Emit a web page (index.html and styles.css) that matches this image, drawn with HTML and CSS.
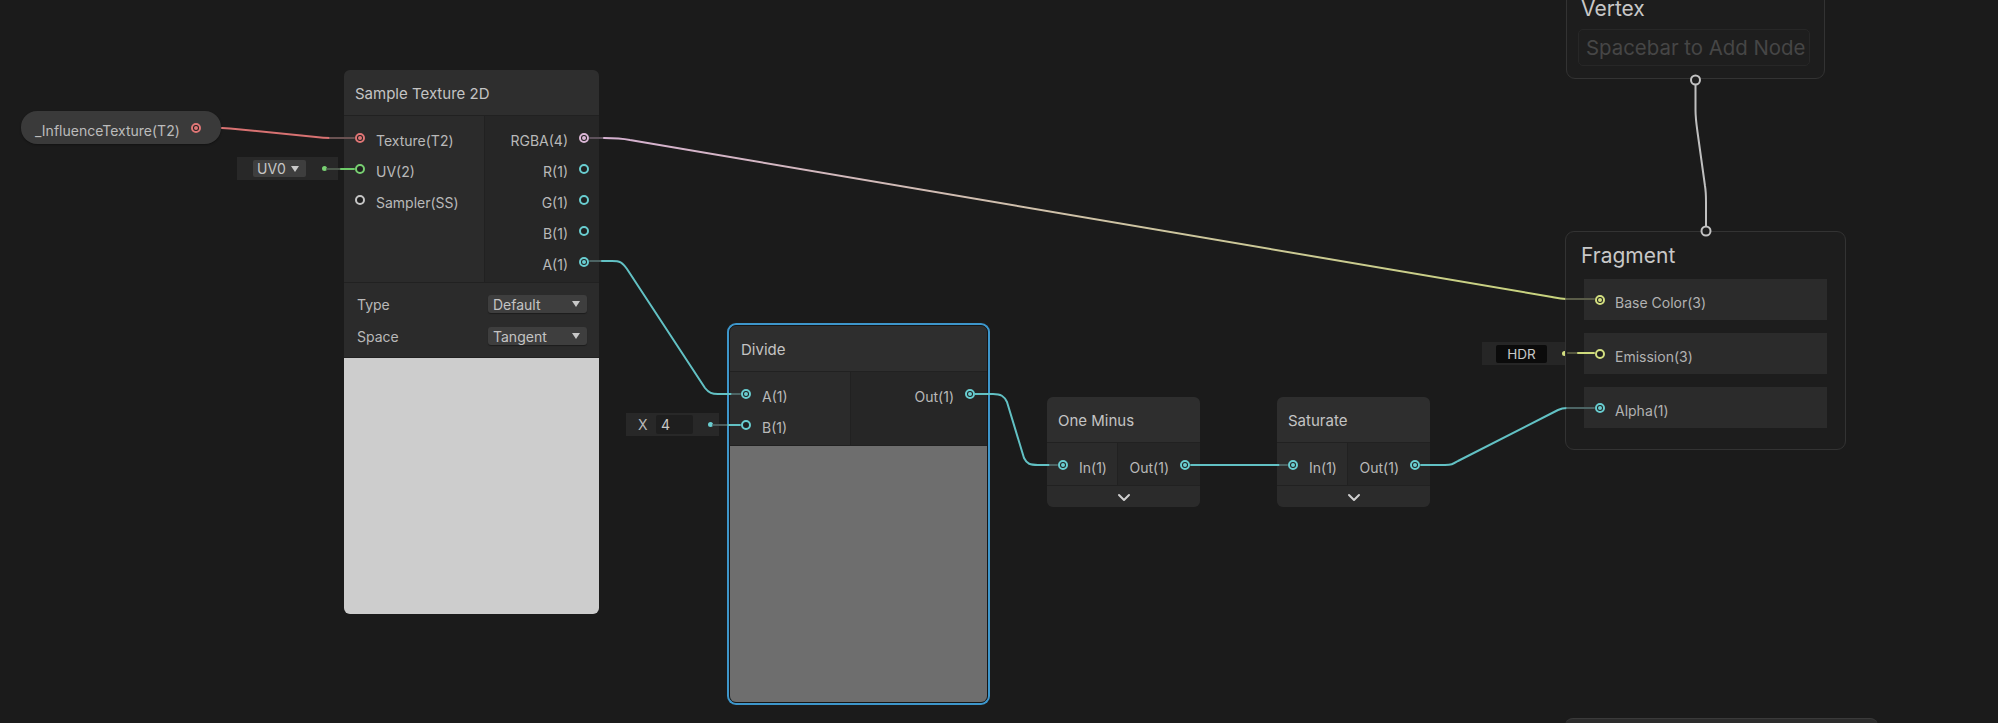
FILE: index.html
```html
<!DOCTYPE html>
<html>
<head>
<meta charset="utf-8">
<link rel="stylesheet" href="styles.css">
</head>
<body>
<div class="canvas">
  <!-- property node -->
  <div class="prop">
    <span class="lbl">_InfluenceTexture(T2)</span>
    <span class="port c-tex on"></span>
  </div>

  <!-- UV0 inline input -->
  <div class="inline uv-inline">
    <div class="chip">UV0<span class="tri"></span></div>
    <span class="dot d-green"></span>
  </div>

  <!-- Sample Texture 2D -->
  <div class="node n-sample">
    <div class="node-title">Sample Texture 2D</div>
    <div class="node-ports">
      <div class="col-in w140">
        <div class="row"><span class="port c-tex on"></span><span class="lbl">Texture(T2)</span></div>
        <div class="row"><span class="port c-v2"></span><span class="lbl">UV(2)</span></div>
        <div class="row"><span class="port c-ss"></span><span class="lbl">Sampler(SS)</span></div>
      </div>
      <div class="col-out">
        <div class="row"><span class="lbl">RGBA(4)</span><span class="port c-v4 on"></span></div>
        <div class="row"><span class="lbl">R(1)</span><span class="port c-v1"></span></div>
        <div class="row"><span class="lbl">G(1)</span><span class="port c-v1"></span></div>
        <div class="row"><span class="lbl">B(1)</span><span class="port c-v1"></span></div>
        <div class="row"><span class="lbl">A(1)</span><span class="port c-v1 on"></span></div>
      </div>
    </div>
    <div class="settings">
      <div class="set-row"><span>Type</span><div class="dropdown">Default<span class="tri"></span></div></div>
      <div class="set-row"><span>Space</span><div class="dropdown">Tangent<span class="tri"></span></div></div>
    </div>
    <div class="preview p-light"></div>
  </div>

  <!-- X 4 inline -->
  <div class="inline x-inline">
    <span class="x-label">X</span>
    <div class="num-field">4</div>
    <span class="dot d-teal"></span>
  </div>

  <!-- Divide -->
  <div class="node n-divide selected">
    <div class="node-title">Divide</div>
    <div class="node-ports">
      <div class="col-in w120">
        <div class="row"><span class="port c-v1 on"></span><span class="lbl">A(1)</span></div>
        <div class="row"><span class="port c-v1"></span><span class="lbl">B(1)</span></div>
      </div>
      <div class="col-out pr12">
        <div class="row"><span class="lbl">Out(1)</span><span class="port c-v1 on"></span></div>
      </div>
    </div>
    <div class="preview p-mid"></div>
  </div>

  <!-- One Minus -->
  <div class="node n-oneminus">
    <div class="node-title">One Minus</div>
    <div class="node-ports">
      <div class="col-in w70">
        <div class="row"><span class="port c-v1 on"></span><span class="lbl">In(1)</span></div>
      </div>
      <div class="col-out">
        <div class="row"><span class="lbl">Out(1)</span><span class="port c-v1 on"></span></div>
      </div>
    </div>
    <div class="collapse"><svg width="14" height="9" viewBox="0 0 14 9"><polyline points="2,2 7,7 12,2" fill="none" stroke="#cfcfcf" stroke-width="2" stroke-linecap="round" stroke-linejoin="round"/></svg></div>
  </div>

  <!-- Saturate -->
  <div class="node n-saturate">
    <div class="node-title">Saturate</div>
    <div class="node-ports">
      <div class="col-in w70">
        <div class="row"><span class="port c-v1 on"></span><span class="lbl">In(1)</span></div>
      </div>
      <div class="col-out">
        <div class="row"><span class="lbl">Out(1)</span><span class="port c-v1 on"></span></div>
      </div>
    </div>
    <div class="collapse"><svg width="14" height="9" viewBox="0 0 14 9"><polyline points="2,2 7,7 12,2" fill="none" stroke="#cfcfcf" stroke-width="2" stroke-linecap="round" stroke-linejoin="round"/></svg></div>
  </div>

  <!-- Vertex block -->
  <div class="stack vertex">
    <div class="stack-title">Vertex</div>
    <div class="add-field">Spacebar to Add Node</div>
  </div>

  <!-- HDR inline -->
  <div class="inline hdr-inline">
    <div class="hdr-chip">HDR</div>
    <span class="dot d-yellow"></span>
  </div>

  <!-- Fragment block -->
  <div class="stack fragment">
    <div class="stack-title">Fragment</div>
    <div class="block-list">
      <div class="block"><span class="port c-v3 on"></span><span class="lbl">Base Color(3)</span></div>
      <div class="block"><span class="port c-v3"></span><span class="lbl">Emission(3)</span></div>
      <div class="block"><span class="port c-v1 on"></span><span class="lbl">Alpha(1)</span></div>
    </div>
  </div>

  <div class="offscreen-node"></div>

  <svg class="wires" width="1998" height="723" viewBox="0 0 1998 723">
    <defs>
      <linearGradient id="gRgba" gradientUnits="userSpaceOnUse" x1="606" y1="0" x2="1566" y2="0">
        <stop offset="0" stop-color="#d6b1d1"/>
        <stop offset="1" stop-color="#c8d47c"/>
      </linearGradient>
    </defs>
    <g fill="none" stroke-width="2" stroke-linecap="round" stroke-linejoin="round">
      <!-- texture -->
      <path d="M222,128 C228,128.3 232,128.6 238,129.2 L316,137 C321,137.7 325,138 330,138" stroke="#d87272"/>
      <path d="M330,138 H354" stroke="#6a5252"/>
      <!-- uv -->
      <path d="M327,169 H341" stroke="#4d5a4c"/>
      <path d="M341,169 H354" stroke="#6ecb69"/>
      <!-- rgba to base color -->
      <path d="M590,138 H604" stroke="#5e525c"/>
      <path d="M604,138 C616,138 620,138 630,140 L1552,297 C1558,298.3 1560,299 1566,299" stroke="url(#gRgba)"/>
      <path d="M1566,299 H1594" stroke="#5a5c48"/>
      <!-- A to divide A -->
      <path d="M590,261 H602" stroke="#4c6464"/>
      <path d="M602,261 H612 C620,261 622,262 627,269 L705,388 C709,393 712,394 718,394 H732" stroke="#62c1c4"/>
      <path d="M732,394 H740" stroke="#4c6464"/>
      <!-- X4 to B -->
      <path d="M713,425 H728" stroke="#4c5c5c"/>
      <path d="M728,425 H740" stroke="#62c1c4"/>
      <!-- divide out to one minus -->
      <path d="M975,394 H993 C1001,394 1004,396 1007,402 L1024,458 C1027,464 1030,465 1038,465 H1050" stroke="#62c1c4"/>
      <path d="M1050,465 H1057" stroke="#4c6464"/>
      <!-- one minus to saturate -->
      <path d="M1191,465 H1280" stroke="#62c1c4"/>
      <path d="M1280,465 H1287" stroke="#4c6464"/>
      <!-- saturate to alpha -->
      <path d="M1421,465 H1445 C1452,465 1453,464 1458,461 L1558,410 C1561,408.5 1563,408 1567,408" stroke="#62c1c4"/>
      <path d="M1567,408 H1594" stroke="#4c6464"/>
      <!-- hdr to emission -->
      <path d="M1568,353 H1578" stroke="#55573f"/>
      <path d="M1578,353 H1594" stroke="#cfdb7c"/>
      <!-- vertex to fragment -->
      <path d="M1695.5,85 L1695.5,110 C1695.5,118 1696.5,125 1697.5,132 L1705,186 C1706,192 1706,196 1706,202 L1706,226" stroke="#bfbfbf"/>
    </g>
    <circle cx="1695.5" cy="80" r="4.5" fill="#1d1d1d" stroke="#c2c2c2" stroke-width="2"/>
    <circle cx="1706" cy="231" r="4.5" fill="#1d1d1d" stroke="#c2c2c2" stroke-width="2"/>
  </svg>
</div>
</body>
</html>
```

FILE: styles.css
```css
* { box-sizing: border-box; }

body {
  margin: 0;
  background: #1b1b1b;
  font-family: Inter, "Noto Sans", "Liberation Sans", sans-serif;
}

.canvas {
  position: relative;
  width: 1998px;
  height: 723px;
  overflow: hidden;
  background: #1b1b1b;
}

.wires {
  position: absolute;
  left: 0;
  top: 0;
  pointer-events: none;
}

.lbl {
  padding-top: 5px;
  white-space: nowrap;
}

/* ports */
.port {
  --c: #c8c8c8;
  position: relative;
  flex: none;
  width: 10px;
  height: 10px;
  border-radius: 50%;
  border: 2px solid var(--c);
  background: #1f1f1f;
}
.port.on::after {
  content: "";
  position: absolute;
  left: 1px;
  top: 1px;
  width: 4px;
  height: 4px;
  border-radius: 50%;
  background: var(--c);
}
.c-tex { --c: #e07676; }
.c-v2 { --c: #78d072; }
.c-ss { --c: #c6c6c6; }
.c-v4 { --c: #dab6d5; }
.c-v1 { --c: #69cdd0; }
.c-v3 { --c: #d3df80; }

.dot {
  width: 5px;
  height: 5px;
  border-radius: 50%;
  margin-left: auto;
  flex: none;
}
.d-green { background: #78d072; }
.d-teal { background: #69cdd0; }
.d-yellow { background: #d3df80; }

/* property pill */
.prop {
  position: absolute;
  left: 21px;
  top: 111px;
  width: 200px;
  height: 33px;
  border-radius: 16px;
  background: #3a3a3a;
  display: flex;
  align-items: center;
  justify-content: space-between;
  padding: 0 20px 0 14px;
  font-size: 14px;
  color: #bcbcbc;
  box-shadow: 0 1px 2px rgba(0,0,0,0.35);
}

/* inline inputs */
.inline {
  position: absolute;
  height: 23px;
  background: #282828;
  display: flex;
  align-items: center;
  font-size: 14px;
  color: #c6c6c6;
}
.uv-inline {
  left: 237px;
  top: 157px;
  width: 101px;
  padding: 0 11px 0 16px;
}
.chip {
  width: 53px;
  height: 17px;
  background: #3e3e3e;
  border-radius: 2px;
  display: flex;
  align-items: center;
  padding-left: 4px;
  gap: 5px;
  font-size: 14px;
  line-height: 17px;
}
.tri {
  width: 0;
  height: 0;
  border-left: 4.5px solid transparent;
  border-right: 4.5px solid transparent;
  border-top: 6px solid #c8c8c8;
}
.x-inline {
  left: 626px;
  top: 413px;
  width: 93px;
  padding: 0 6px 0 12px;
}
.x-label {
  width: 18px;
  color: #b8b8b8;
}
.num-field {
  width: 37px;
  height: 19px;
  background: #1e1e1e;
  border-radius: 2px;
  padding-left: 5px;
  line-height: 19px;
  color: #c8c8c8;
}
.hdr-inline {
  left: 1482px;
  top: 342px;
  width: 95px;
  padding: 0 10px 0 14px;
  background: #262626;
}
.hdr-chip {
  width: 51px;
  height: 18px;
  background: #0b0b0b;
  border-radius: 2px;
  text-align: center;
  line-height: 19px;
  font-size: 13.5px;
  color: #c8c8c8;
}

/* nodes */
.node {
  position: absolute;
  border-radius: 6px;
  overflow: hidden;
  background: #202020;
  display: flex;
  flex-direction: column;
}
.node-title {
  height: 46px;
  flex: none;
  border-bottom: 1px solid #212121;
  background: #2e2e2e;
  display: flex;
  align-items: center;
  padding: 2px 0 0 11px;
  font-size: 15px;
  color: #c4c4c4;
}
.node-ports {
  display: flex;
  gap: 1px;
  background: #212121;
  border-bottom: 1px solid #212121;
  flex: none;
}
.col-in {
  background: #2b2b2b;
  padding: 6px 0 5px;
  display: flex;
  flex-direction: column;
}
.col-out {
  flex: 1;
  background: #262626;
  padding: 6px 10px 5px 0;
  display: flex;
  flex-direction: column;
  align-items: flex-end;
}
.pr12 { padding-right: 12px; }
.w140 { width: 140px; }
.w120 { width: 120px; }
.w70 { width: 70px; }
.row {
  height: 31px;
  display: flex;
  align-items: center;
  gap: 11px;
  font-size: 14px;
  color: #b9b9b9;
  white-space: nowrap;
}
.col-in .row { padding-left: 11px; }

.settings {
  background: #2b2b2b;
  padding: 5px 12px 5px 13px;
  border-bottom: 1px solid #212121;
  flex: none;
}
.set-row {
  height: 32px;
  display: flex;
  align-items: center;
  justify-content: space-between;
  font-size: 14px;
  color: #b9b9b9;
}
.dropdown {
  width: 99px;
  height: 18px;
  background: #3e3e3e;
  border-radius: 3px;
  display: flex;
  align-items: center;
  justify-content: space-between;
  padding: 0 7px 0 5px;
  font-size: 14px;
  color: #c4c4c4;
  box-shadow: 0 1px 1px rgba(0,0,0,0.35);
}

.preview { flex: 1; }
.p-light { background: #cdcdcd; }
.p-mid { background: #6e6e6e; }

.collapse {
  flex: 1;
  background: #2b2b2b;
  display: flex;
  align-items: center;
  justify-content: center;
  padding-top: 2px;
}

.n-sample { left: 344px; top: 70px; width: 255px; height: 544px; }
.n-divide {
  left: 729px;
  top: 325px;
  width: 259px;
  height: 378px;
  border: 1px solid #161616;
  border-radius: 7px;
  box-shadow: 0 0 0 2px #3d96cb;
}
.n-oneminus { left: 1047px; top: 397px; width: 153px; height: 110px; }
.n-saturate { left: 1277px; top: 397px; width: 153px; height: 110px; }

/* master stack */
.stack {
  position: absolute;
  border: 1px solid #333333;
  border-radius: 9px;
  background: #1d1d1d;
}
.stack-title {
  height: 28px;
  line-height: 28px;
  font-size: 21px;
  color: #c8c8c8;
  padding-left: 15px;
}
.vertex {
  left: 1566px;
  top: -17px;
  width: 259px;
  height: 96px;
  padding: 11px 14px 13px 11px;
}
.vertex .stack-title { padding-left: 3px; margin-bottom: 6px; }
.add-field {
  height: 37px;
  border: 1px solid #272727;
  background: #1e1e1e;
  border-radius: 5px;
  padding-left: 7px;
  line-height: 35px;
  font-size: 20.4px;
  color: #464646;
  white-space: nowrap;
}
.fragment {
  left: 1565px;
  top: 231px;
  width: 281px;
  height: 219px;
  padding: 10px 18px 21px 0;
}
.fragment .stack-title { margin-bottom: 9px; }
.block-list {
  margin-left: 18px;
  display: flex;
  flex-direction: column;
  gap: 13px;
}
.block {
  height: 41px;
  background: #2b2b2b;
  display: flex;
  align-items: center;
  gap: 10px;
  padding-left: 11px;
  font-size: 14px;
  color: #b2b2b2;
}

.offscreen-node {
  position: absolute;
  left: 1565px;
  top: 718px;
  width: 313px;
  height: 40px;
  border-radius: 8px;
  background: #2c2c2c;
  border-top: 1px solid #3a3a3a;
}
```
